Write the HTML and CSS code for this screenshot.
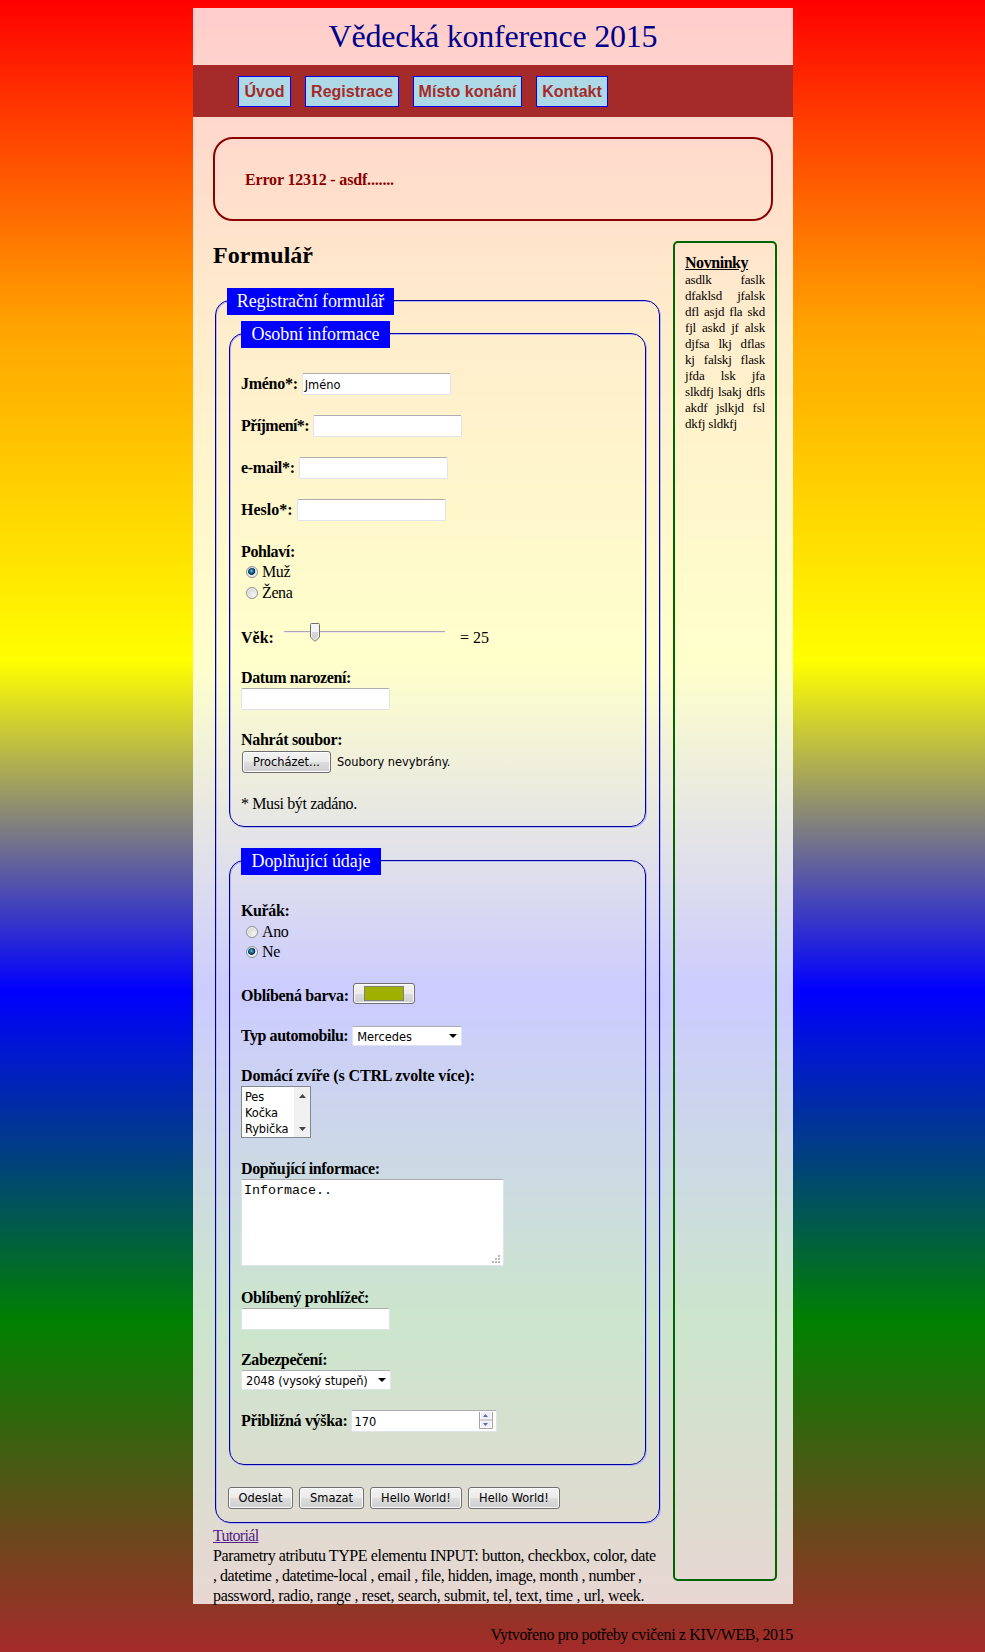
FILE: index.html
```html
<!DOCTYPE html>
<html lang="cs">
<head>
<meta charset="utf-8">
<title>Vědecká konference 2015</title>
<link rel="stylesheet" href="styles.css">
</head>
<body>
<div class="page">
  <header class="title">Vědecká konference 2015</header>
  <nav class="menu">
    <a class="menu-item w-uvod">Úvod</a>
    <a class="menu-item w-reg">Registrace</a>
    <a class="menu-item w-misto">Místo konání</a>
    <a class="menu-item w-kontakt">Kontakt</a>
  </nav>
  <div class="error">Error 12312 - asdf.......</div>
  <div class="columns">
    <main class="main">
      <h2 class="heading">Formulář</h2>
      <section class="group outer">
        <div class="legend w-leg1">Registrační formulář</div>
        <section class="group personal">
          <div class="legend w-leg2">Osobní informace</div>
          <div class="row field first"><b class="snug">Jméno*:</b><span class="input">Jméno</span></div>
          <div class="row field"><b class="tight">Příjmení*:</b><span class="input"></span></div>
          <div class="row field"><b class="snug">e-mail*:</b><span class="input"></span></div>
          <div class="row field"><b class="normal">Heslo*:</b><span class="input"></span></div>
          <div class="row"><b>Pohlaví:</b></div>
          <div class="row"><span class="radio on"></span>Muž</div>
          <div class="row zena"><span class="radio"></span>Žena</div>
          <div class="row age"><b class="normal">Věk:</b>
            <svg class="slider" width="162" height="20" viewBox="0 0 162 20">
              <path d="M0 8.5H161" stroke="#a9a9b4"/><path d="M0 9.5H161" stroke="#e9e9ee"/>
              <path d="M26.5 1.5q0-1 1-1h7q1 0 1 1v12.500l-4 4h-1l-4-4z" fill="#f4f4f4" stroke="#6f6f6f"/>
              <path d="M28 9h6v5l-3 3-3-3z" fill="#d4d4d4"/>
            </svg>
            <span class="normal">= 25</span></div>
          <div class="row"><b>Datum narození:</b></div>
          <span class="input block date"></span>
          <div class="row"><b class="snug">Nahrát soubor:</b></div>
          <div class="file"><span class="button w-file">Procházet...</span><span class="ui">Soubory nevybrány.</span></div>
          <div class="row">* Musi být zadáno.</div>
        </section>
        <section class="group extra">
          <div class="legend w-leg3">Doplňující údaje</div>
          <div class="row smoker"><b>Kuřák:</b></div>
          <div class="row ano"><span class="radio"></span>Ano</div>
          <div class="row ne"><span class="radio on"></span>Ne</div>
          <div class="row pitch40"><b class="favourite">Oblíbená barva:</b><span class="button color"><span class="swatch"></span></span></div>
          <div class="row pitch40"><b class="car">Typ automobilu:</b><span class="select w-car">Mercedes<svg width="8" height="4"><path d="M0 0h8L4 4z"/></svg></span></div>
          <div class="row"><b class="wide">Domácí zvíře (s CTRL zvolte více):</b></div>
          <div class="list">
            <div class="options"><span>Pes</span><span>Kočka</span><span>Rybička</span></div>
            <div class="scroll"><svg width="7" height="4"><path d="M0 4h7L3.500 0z" fill="#444"/></svg><svg width="7" height="4"><path d="M0 0h7L3.500 4z" fill="#444"/></svg></div>
          </div>
          <div class="row"><b>Dopňující informace:</b></div>
          <div class="textarea">Informace..<svg class="grip" width="8" height="8"><path d="M6 0h2v2H6zM3 3h2v2H3zM6 3h2v2H6zM0 6h2v2H0zM3 6h2v2H3zM6 6h2v2H6z" fill="#b8b8b8"/></svg></div>
          <div class="row"><b>Oblíbený prohlížeč:</b></div>
          <span class="input block browser"></span>
          <div class="row"><b>Zabezpečení:</b></div>
          <span class="select block w-sec">2048 (vysoký stupeň)<svg width="8" height="4"><path d="M0 0h8L4 4z"/></svg></span>
          <div class="row"><b class="favourite">Přibližná výška:</b><span class="input number">170
            <svg width="14" height="17"><path d="M.5 0v16.500h13V0M0 8h14" fill="none" stroke="#a4a4a8"/><path d="M2 0h10v7H2zM2 9h10v6H2z" fill="#efeff2"/><path d="M4 5h5L6.500 2zM4 11h5l-2.500 3z" fill="#5a6bb5"/></svg></span></div>
        </section>
        <div class="actions"><span class="button w-send">Odeslat</span><span class="button w-send">Smazat</span><span class="button w-hello">Hello World!</span><span class="button w-hello">Hello World!</span></div>
      </section>
      <div class="notes">
        <a class="link">Tutoriál</a><br>
        Parametry atributu TYPE elementu INPUT: button, checkbox, color, date<br><span class="line2">, datetime , datetime-local , email , file, hidden, image, month , number ,</span><br><span class="line3">password, radio, range , reset, search, submit, tel, text, time , url, week.</span>
      </div>
    </main>
    <aside class="news">
      <div class="news-title">Novninky</div>
      <p class="news-text">asdlk faslk dfaklsd jfalsk dfl asjd fla skd fjl askd jf alsk djfsa lkj dflas kj falskj flask jfda lsk jfa slkdfj lsakj dfls akdf jslkjd fsl dkfj sldkfj</p>
    </aside>
  </div>
</div>
<footer class="footer">Vytvořeno pro potřeby cvičeni z KIV/WEB, 2015</footer>
</body>
</html>
```
FILE: styles.css
```css
* { box-sizing: border-box; }
body {
  margin: 0;
  padding-top: 8px;
  height: 1652px;
  background: linear-gradient(red, orange, yellow, blue, green, brown);
  font: 16px/20px "Liberation Serif", serif;
  color: #000;
}
.page { width: 600px; height: 1596px; margin: 0 auto 0 193px; background: rgba(255, 255, 255, .8); }
.title { height: 57px; line-height: 57px; font-size: 32px; letter-spacing: -.23px; text-align: center; color: darkblue; }
.menu { height: 52px; padding: 11px 0 0 45px; display: flex; gap: 14px; background: brown; }
.menu-item {
  height: 31px; border: 1px solid blue; background: lightblue; color: brown;
  font: bold 16px/29px "Liberation Sans", sans-serif; text-align: center; white-space: nowrap;
}
.w-uvod { width: 53px; }
.w-reg { width: 94px; }
.w-misto { width: 109px; }
.w-kontakt { width: 72px; }
.error {
  margin: 20px 20px 20px; height: 84px; padding: 31px 30px; border: 2px solid darkred;
  border-radius: 20px; color: darkred; font-weight: bold; letter-spacing: -.17px;
}
.columns { display: flex; padding-left: 20px; }
.main { width: 460px; white-space: nowrap; }
.heading { margin: 0 0 31px; font-size: 24px; line-height: 28px; }
.group {
  border: 1px solid #000099; border-radius: 15px;
  box-shadow: 1px 1px 0 #b4b4ff, inset 1px 1px 0 #b4b4ff;
}
.outer { width: 445px; height: 1223px; margin-left: 2px; padding: 0 13px; margin-top: 31px; }
.outer > .legend { margin-left: -2px; }
.legend {
  width: 149px; height: 27px; margin-top: -13px; background: blue; color: #fff;
  font-size: 18px; line-height: 26px; text-align: center; letter-spacing: -.1px;
}
.w-leg1 { width: 167px; }
.w-leg3 { width: 140px; }
.personal { width: 417px; height: 494px; margin-top: 18px; padding-left: 11px; }
.extra { width: 417px; height: 605px; margin-top: 33px; padding-left: 11px; }
.row { height: 20px; display: flex; align-items: center; gap: 4px; letter-spacing: -.38px; }
.normal { letter-spacing: 0; }
.wide { letter-spacing: -.14px; }
.snug { letter-spacing: -.28px; }
.tight { letter-spacing: -.57px; }
.favourite { letter-spacing: -.32px; }
.car { letter-spacing: -.45px; }
.field { margin-bottom: 22px; }
.first { margin-top: 26px; }
.input, .select {
  width: 149px; height: 22px; border: 1px solid #dfe3ec; border-top-color: #abadb3; border-radius: 2px;
  background: #fff; padding: 0 2px; font: 12.7px/21px "DejaVu Sans Condensed", sans-serif; letter-spacing: 0;
}
.block { display: block; }
.radio {
  width: 12px; height: 12px; margin-left: 5px; border: 1px solid #8e8f8f; border-radius: 50%;
  background: radial-gradient(circle at 65% 65%, #f4f4f4, #c8c8c8); box-shadow: inset 0 0 0 1px #f8f8f8;
}
.radio.on { background: radial-gradient(circle at 45% 40%, #6cc8ee 0, #17608e 2px, #0a2f4d 3.500px, #e4e8ea 4.200px); }
.zena { margin-top: 1px; margin-bottom: 25px; }
.age { margin-bottom: 20px; }
.slider { margin: -11px 10px 0 6px; }
.date { margin-bottom: 20px; }
.ui, .button { font: 12.7px/20px "DejaVu Sans Condensed", sans-serif; letter-spacing: 0; }
.ui { padding-top: 1px; }
.file { display: flex; gap: 6px; height: 22px; margin: 1px 0 21px 1px; }
.button {
  height: 22px; border: 1px solid #707070; border-radius: 3px; text-align: center;
  background: linear-gradient(#f2f2f2, #ebebeb 50%, #dddddd 50%, #cfcfcf); box-shadow: inset 0 0 0 1px #fcfcfc;
}
.w-file { width: 89px; }
.w-send { width: 65px; }
.w-hello { width: 92px; }
.smoker { margin-top: 26px; }
.ano { margin-top: 1px; }
.ne { margin-bottom: 24px; }
.pitch40 { margin-bottom: 20px; }
.color { width: 62px; height: 21px; padding: 2px 10px; margin-top: -5px; }
.swatch { display: block; height: 15px; border: 1px solid #808080; background: #a0b000; }
.select { height: 20px; line-height: 19px; padding: 0 4px; display: flex; justify-content: space-between; align-items: center; }
.w-car { width: 110px; }
.w-sec { width: 150px; margin-bottom: 21px; letter-spacing: -.1px; }
.list { width: 70px; height: 52px; margin-bottom: 21px; display: flex; justify-content: space-between; border: 1px solid #828790; background: #fff; font: 12.7px/16px "DejaVu Sans Condensed", sans-serif; }
.options { display: flex; flex-direction: column; padding: 2px 0 0 3px; letter-spacing: -.1px; }
.scroll { width: 16px; background: #f0f0f0; display: flex; flex-direction: column; align-items: center; justify-content: space-between; padding: 7px 0 6px; }
.textarea {
  position: relative; width: 263px; height: 87px; margin-bottom: 22px; padding: 3px 2px; border: 1px solid #dfe3ec;
  border-top-color: #abadb3; border-radius: 2px; background: #fff; font: 13.333px/16px "Liberation Mono", monospace;
}
.grip { position: absolute; right: 3px; bottom: 2px; }
.browser { margin-bottom: 20px; }
.number { width: 146px; padding-right: 3px; display: flex; justify-content: space-between; }
.number svg { margin-top: 1px; }
.actions { display: flex; gap: 6px; margin: 22px 0 0 -1px; }
.notes { margin-top: 3px; letter-spacing: -.39px; }
.line2 { letter-spacing: -.47px; }
.line3 { letter-spacing: -.32px; }
.link { color: #551a8b; text-decoration: underline; letter-spacing: -.7px; }
.news { width: 104px; height: 1340px; padding: 11px 10px 10px; border: 2px solid darkgreen; border-radius: 5px; }
.news-title { font-weight: bold; text-decoration: underline; line-height: 18px; letter-spacing: -.45px; }
.news-text { margin: 0; font-size: 13px; line-height: 16px; text-align: justify; letter-spacing: -.17px; }
.footer { width: 793px; margin-top: 21px; text-align: right; letter-spacing: -.36px; }
```
